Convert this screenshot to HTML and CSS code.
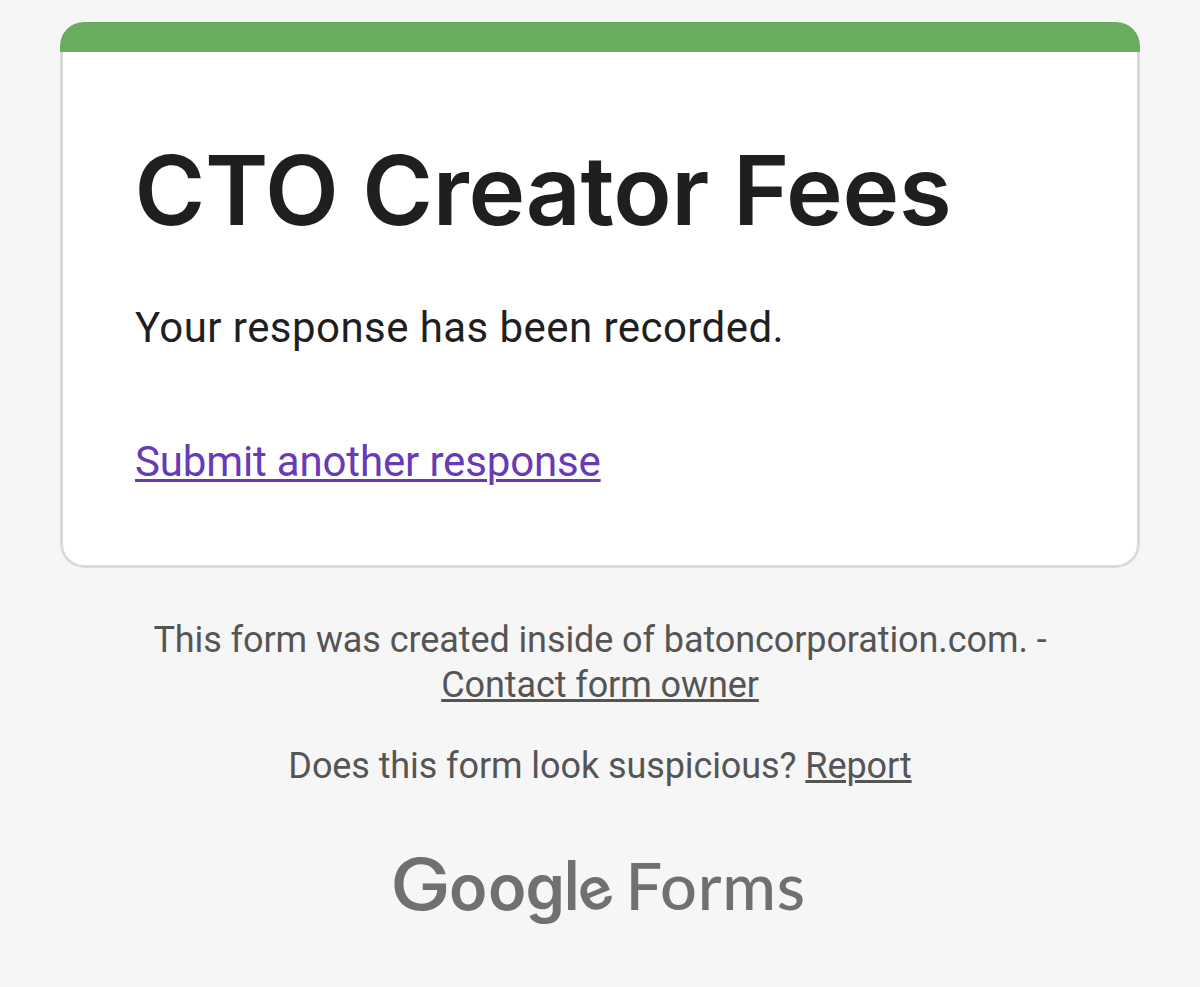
FILE: index.html
```html
<!DOCTYPE html>
<html lang="en">
<head>
<meta charset="utf-8">
<title>CTO Creator Fees</title>
<link rel="stylesheet" href="styles.css">
</head>
<body>
<main class="card">
<div class="accent"></div>
<div class="content">
<h1 class="title">CTO Creator Fees</h1>
<p class="message">Your response has been recorded.</p>
<a class="again" href="#">Submit another response</a>
</div>
</main>
<footer class="footer">
<p class="note">This form was created inside of batoncorporation.com. -<br><a href="#">Contact form owner</a></p>
<p class="note report">Does this form look suspicious? <a href="#">Report</a></p>
<svg class="brand" width="460" height="130" viewBox="370 820 460 130" role="img" aria-label="Google Forms">
<text class="google cap" transform="translate(390 911) scale(1.13 1)">G</text>
<text class="google" y="911 911 911 911 915.5" x="449 488 525.5 563 585.5" rotate="0 0 0 0 -22">oog<tspan class="stem">l</tspan><tspan class="tilt">e</tspan></text>
<text class="forms" y="911" x="625.5">Forms</text>
</svg>
</footer>
</body>
</html>
```
FILE: styles.css
```css
* { box-sizing: border-box; }
body { margin: 0; padding-top: 22px; height: 987px; overflow: hidden; background: #f6f6f6; font-family: Roboto, sans-serif; color: #1f1f1f; }
.card { width: 1080px; height: 546px; margin: 0 auto; border-radius: 24px; overflow: hidden; background: #fff; display: flex; flex-direction: column; }
.accent { height: 30px; background: #68ad5e; flex: none; }
.content { flex: 1; padding: 88px 72px 0; border: 3px solid #dadada; border-top: 0; border-radius: 0 0 24px 24px; }
.title { margin: 0 0 0 -0.5px; font: 600 96px/100px Inter, sans-serif; letter-spacing: -0.32px; white-space: nowrap; }
.message { margin: 58px 0 0; font-size: 42px; line-height: 60px; letter-spacing: 0.44px; }
.again { display: inline-block; margin-top: 74px; font-size: 42px; line-height: 60px; letter-spacing: -0.15px; color: #673ab7; text-decoration-thickness: 3px; text-underline-offset: 3px; }
.footer { text-align: center; color: #555; padding-top: 50px; }
.note { margin: 0; font-size: 36px; line-height: 45px; letter-spacing: -0.09px; }
.note a { color: inherit; text-decoration-thickness: 3px; text-underline-offset: 2px; }
.report { margin-top: 36px; }
.brand { display: block; margin: 30px auto 0; fill: #707070; font-family: Lato, sans-serif; }
.google { font-family: Inter, sans-serif; font-size: 63px; font-weight: 600; }
.cap { font-size: 72px; font-weight: 500; }
.stem { font-size: 69px; font-weight: 500; }
.tilt { font-size: 58px; }
.forms { font-size: 65px; font-weight: 500; letter-spacing: 0.7px; }
```
